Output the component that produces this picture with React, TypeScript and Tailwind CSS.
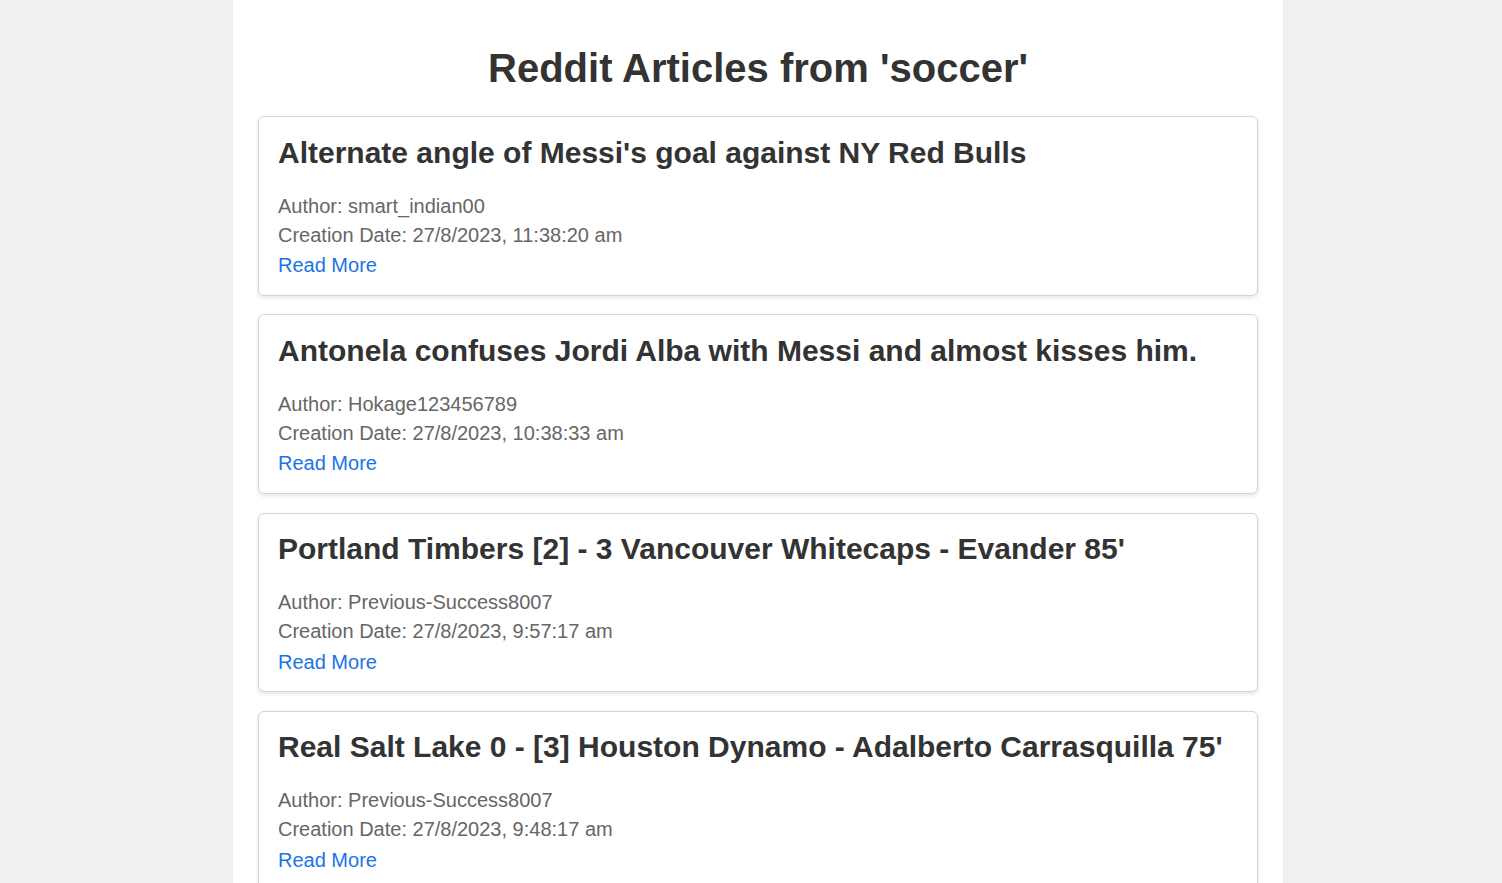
import React from 'react';

interface Article {
    title: string;
    author: string;
    created: string;
}

const articles: Article[] = [
    { title: "Alternate angle of Messi's goal against NY Red Bulls", author: 'smart_indian00', created: '27/8/2023, 11:38:20 am' },
    { title: 'Antonela confuses Jordi Alba with Messi and almost kisses him.', author: 'Hokage123456789', created: '27/8/2023, 10:38:33 am' },
    { title: "Portland Timbers [2] - 3 Vancouver Whitecaps - Evander 85'", author: 'Previous-Success8007', created: '27/8/2023, 9:57:17 am' },
    { title: "Real Salt Lake 0 - [3] Houston Dynamo - Adalberto Carrasquilla 75'", author: 'Previous-Success8007', created: '27/8/2023, 9:48:17 am' },
];

export default function App() {
    return (
        <div className="min-h-screen bg-[#f0f0f0] pl-[14px] font-['Liberation_Sans',Arial,sans-serif]">
            <div className="mx-auto w-[1050px] bg-white px-[25px] pt-[25px] pb-[25px] min-h-screen">
                <h1 className="mt-[20px] mb-[25px] text-center text-[40px] leading-[46px] font-bold text-[#333]">
                    Reddit Articles from 'soccer'
                </h1>
                {articles.map((a, i) => (
                    <div
                        key={i}
                        className="mb-[18.75px] rounded-[6px] border border-[#d4d4d4] bg-white px-[19px] pt-[18.5px] pb-[14.5px] shadow-[0_2px_4px_rgba(0,0,0,0.1)]"
                    >
                        <h2 className="mb-[21px] text-[30px] leading-[34px] font-bold text-[#333]">{a.title}</h2>
                        <p className="text-[20px] leading-[30px] text-[#666]">Author: {a.author}</p>
                        <p className="text-[20px] leading-[29.5px] text-[#666]">Creation Date: {a.created}</p>
                        <a href="#" className="block text-[20px] leading-[30px] text-[#1a73e8]">Read More</a>
                    </div>
                ))}
            </div>
        </div>
    );
}
